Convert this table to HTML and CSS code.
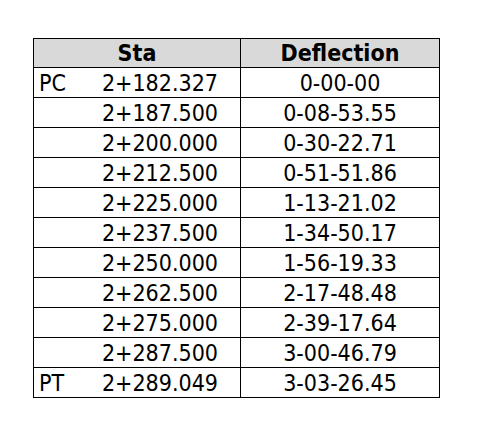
FILE: index.html
```html
<!DOCTYPE html>
<html>
<head>
<meta charset="utf-8">
<link rel="stylesheet" href="styles.css">
</head>
<body>
<table class="curve">
  <thead>
    <tr><th class="c-sta">Sta</th><th class="c-def">Deflection</th></tr>
  </thead>
  <tbody>
    <tr><td class="c-sta"><div class="sta"><span class="pt">PC</span><span>2+182.327</span></div></td><td class="c-def">0-00-00</td></tr>
    <tr><td class="c-sta"><div class="sta"><span class="pt"></span><span>2+187.500</span></div></td><td class="c-def">0-08-53.55</td></tr>
    <tr><td class="c-sta"><div class="sta"><span class="pt"></span><span>2+200.000</span></div></td><td class="c-def">0-30-22.71</td></tr>
    <tr><td class="c-sta"><div class="sta"><span class="pt"></span><span>2+212.500</span></div></td><td class="c-def">0-51-51.86</td></tr>
    <tr><td class="c-sta"><div class="sta"><span class="pt"></span><span>2+225.000</span></div></td><td class="c-def">1-13-21.02</td></tr>
    <tr><td class="c-sta"><div class="sta"><span class="pt"></span><span>2+237.500</span></div></td><td class="c-def">1-34-50.17</td></tr>
    <tr><td class="c-sta"><div class="sta"><span class="pt"></span><span>2+250.000</span></div></td><td class="c-def">1-56-19.33</td></tr>
    <tr><td class="c-sta"><div class="sta"><span class="pt"></span><span>2+262.500</span></div></td><td class="c-def">2-17-48.48</td></tr>
    <tr><td class="c-sta"><div class="sta"><span class="pt"></span><span>2+275.000</span></div></td><td class="c-def">2-39-17.64</td></tr>
    <tr><td class="c-sta"><div class="sta"><span class="pt"></span><span>2+287.500</span></div></td><td class="c-def">3-00-46.79</td></tr>
    <tr><td class="c-sta"><div class="sta"><span class="pt">PT</span><span>2+289.049</span></div></td><td class="c-def">3-03-26.45</td></tr>
  </tbody>
</table>
</body>
</html>
```

FILE: styles.css
```css
html, body {
  margin: 0;
  padding: 0;
  background: #ffffff;
}
body {
  padding: 38px 0 0 33px;
  font-family: "DejaVu Sans Condensed", "DejaVu Sans", "Liberation Sans", sans-serif;
  font-stretch: condensed;
  color: #000000;
}
.curve {
  border-collapse: collapse;
  table-layout: fixed;
  width: 406px;
}
.curve th, .curve td {
  border: 1px solid #000000;
  padding: 0;
  height: 30px;
  font-size: 23px;
  line-height: 23px;
  vertical-align: bottom;
  padding-bottom: 2px;
  box-sizing: border-box;
}
.curve th {
  height: 29px;
  background: #d9d9d9;
  font-weight: bold;
  text-align: center;
}
.c-sta {
  width: 207px;
}
.c-def {
  width: 199px;
  text-align: center;
}
.sta {
  display: flex;
  justify-content: space-between;
  padding: 0 22px 0 5px;
}
```
